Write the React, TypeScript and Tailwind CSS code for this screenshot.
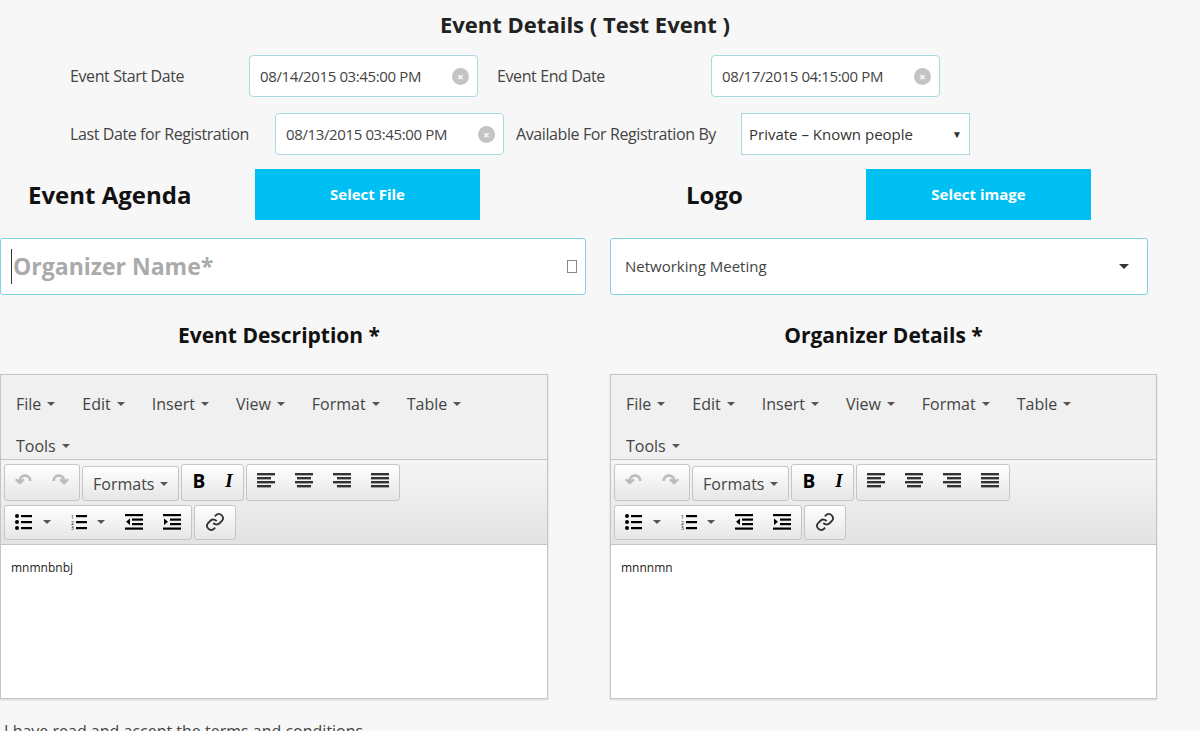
import React from "react";

const font = { fontFamily: "'Open Sans', 'Liberation Sans', sans-serif" };

function DateInput({ value, width }: { value: string; width: string }) {
  return (
    <div className={`flex h-[42px] items-center justify-between rounded-sm border border-[#a9d8e0] bg-white pl-[10px] pr-[8px] ${width}`}>
      <span className="text-[15px] text-[#444] tracking-tight">{value}</span>
      <span className="flex h-[17px] w-[17px] items-center justify-center rounded-full bg-[#c4c4c4] text-[11px] font-bold leading-none text-white">×</span>
    </div>
  );
}

const Caret = () => <span className="ml-[6px] inline-block h-0 w-0 border-x-[4px] border-t-[4px] border-x-transparent border-t-[#555] align-middle" />;

function Lines({ kind }: { kind: "left" | "center" | "right" | "justify" }) {
  const rows = [14, 10, 14, 10];
  return (
    <svg width="18" height="16" viewBox="0 0 18 16">
      {rows.map((w, i) => {
        const ww = kind === "justify" ? 18 : w + 4;
        const x = kind === "left" || kind === "justify" ? 0 : kind === "right" ? 18 - ww : (18 - ww) / 2;
        return <rect key={i} x={x} y={i * 4} width={ww} height="2.4" fill="#333" />;
      })}
    </svg>
  );
}

function Editor({ text }: { text: string }) {
  const btn = "flex h-[33px] items-center justify-center px-[10px]";
  const group = "flex rounded-[3px] border border-[#c5c5c5] bg-gradient-to-b from-white to-[#e6e6e6]";
  return (
    <div className="flex h-[325px] flex-col border border-[#c5c5c5] bg-white shadow-[0_1px_2px_rgba(0,0,0,0.15)]">
      <div className="flex h-[85px] flex-wrap content-start gap-x-[27px] border-b border-[#c5c5c5] bg-[#f0f0f0] px-[15px] pt-[8px] text-[16px] text-[#444]">
        {["File", "Edit", "Insert", "View", "Format", "Table", "Tools"].map((m) => (
          <span key={m} className="flex h-[42px] items-center">{m}<Caret /></span>
        ))}
      </div>
      <div className="flex flex-col gap-[4px] border-b border-[#c5c5c5] bg-gradient-to-b from-[#f5f5f5] to-[#e3e3e3] px-[3px] py-[4px]">
        <div className="flex gap-[2px]">
          <div className={group}>
            <span className={`${btn} text-[20px] font-bold text-[#bbb]`}>↶</span>
            <span className={`${btn} text-[20px] font-bold text-[#bbb]`}>↷</span>
          </div>
          <div className={`${group} mt-[2px] h-[35px]`}>
            <span className={`${btn} h-[35px] text-[16px] text-[#444]`}>Formats<Caret /></span>
          </div>
          <div className={group}>
            <span className={`${btn} text-[19px] font-bold`}>B</span>
            <span className={`${btn} text-[19px] font-bold italic`} style={{ fontFamily: "'Liberation Serif', serif" }}>I</span>
          </div>
          <div className={group}>
            <span className={btn}><Lines kind="left" /></span>
            <span className={btn}><Lines kind="center" /></span>
            <span className={btn}><Lines kind="right" /></span>
            <span className={btn}><Lines kind="justify" /></span>
          </div>
        </div>
        <div className="flex gap-[2px]">
          <div className={group}>
            <span className={btn}>
              <svg width="22" height="16" viewBox="0 0 22 16"><circle cx="2" cy="2" r="2" /><circle cx="2" cy="8" r="2" /><circle cx="2" cy="14" r="2" /><rect x="6" y="1" width="11" height="2.2" /><rect x="6" y="7" width="11" height="2.2" /><rect x="6" y="13" width="11" height="2.2" /></svg>
              <Caret />
            </span>
            <span className={btn}>
              <svg width="20" height="16" viewBox="0 0 20 16"><text x="0" y="5" fontSize="5">1</text><text x="0" y="10.5" fontSize="5">2</text><text x="0" y="16" fontSize="5">3</text><rect x="5" y="1" width="11" height="2.2" /><rect x="5" y="7" width="11" height="2.2" /><rect x="5" y="13" width="11" height="2.2" /></svg>
              <Caret />
            </span>
            <span className={btn}>
              <svg width="18" height="16" viewBox="0 0 18 16"><rect x="0" y="0" width="18" height="2.2" /><rect x="7" y="4.5" width="11" height="2.2" /><rect x="7" y="9" width="11" height="2.2" /><rect x="0" y="13.5" width="18" height="2.2" /><path d="M5 4.5 L1 7.8 L5 11 Z" /></svg>
            </span>
            <span className={btn}>
              <svg width="18" height="16" viewBox="0 0 18 16"><rect x="0" y="0" width="18" height="2.2" /><rect x="7" y="4.5" width="11" height="2.2" /><rect x="7" y="9" width="11" height="2.2" /><rect x="0" y="13.5" width="18" height="2.2" /><path d="M1 4.5 L5 7.8 L1 11 Z" /></svg>
            </span>
          </div>
          <div className={group}>
            <span className={btn}>
              <svg width="20" height="20" viewBox="0 0 24 24" fill="none" stroke="#333" strokeWidth="2.2"><path d="M10 13a5 5 0 0 0 7.5.5l3-3a5 5 0 0 0-7-7l-1.7 1.7" /><path d="M14 11a5 5 0 0 0-7.5-.5l-3 3a5 5 0 0 0 7 7l1.7-1.7" /></svg>
            </span>
          </div>
        </div>
      </div>
      <div className="px-[10px] pt-[14px] text-[12px] text-[#222]">{text}</div>
    </div>
  );
}

export default function App() {
  const label = "text-[16px] text-[#444] tracking-tight";
  return (
    <div className="h-[731px] w-[1200px] overflow-hidden bg-[#f7f7f7]" style={font}>
      <div className="pt-[8px] pl-[440px] text-[22px] font-bold text-[#222]">Event Details ( Test Event )</div>
      <div className="mt-[14px] flex items-center pl-[70px]">
        <span className={`${label} w-[179px]`}>Event Start Date</span>
        <DateInput value="08/14/2015 03:45:00 PM" width="w-[229px]" />
        <span className={`${label} ml-[19px] w-[214px]`}>Event End Date</span>
        <DateInput value="08/17/2015 04:15:00 PM" width="w-[229px]" />
      </div>
      <div className="mt-[16px] flex items-center pl-[70px]">
        <span className={`${label} w-[205px]`}>Last Date for Registration</span>
        <DateInput value="08/13/2015 03:45:00 PM" width="w-[229px]" />
        <span className={`${label} ml-[12px] w-[225px]`}>Available For Registration By</span>
        <div className="flex h-[42px] w-[229px] items-center justify-between border border-[#a9d8e0] bg-white px-[7px] text-[15px] text-[#333]">
          <span>Private – Known people</span>
          <span className="text-[10px]">▼</span>
        </div>
      </div>
      <div className="mt-[14px] flex items-center">
        <span className="w-[255px] pl-[28px] text-[24px] font-bold text-[#111]">Event Agenda</span>
        <div className="flex h-[51px] w-[225px] items-center justify-center bg-[#00bff3] text-[15px] font-bold text-white">Select File</div>
        <span className="w-[386px] pl-[206px] text-[24px] font-bold text-[#111]">Logo</span>
        <div className="flex h-[51px] w-[225px] items-center justify-center bg-[#00bff3] text-[15px] font-bold text-white">Select image</div>
      </div>
      <div className="mt-[18px] flex gap-[24px]">
        <div className="flex h-[57px] w-[586px] items-center justify-between rounded-[3px] border border-[#7fd3e3] bg-white pl-[10px] pr-[8px]">
          <span className="border-l border-[#333] pl-[1px] text-[23px] font-bold text-[#aaa]">Organizer Name*</span>
          <span className="h-[13px] w-[10px] border border-[#888]" />
        </div>
        <div className="flex h-[57px] w-[538px] items-center justify-between rounded-[3px] border border-[#7fd3e3] bg-white pl-[14px] pr-[18px]">
          <span className="text-[15px] text-[#444]">Networking Meeting</span>
          <span className="h-0 w-0 border-x-[5px] border-t-[5px] border-x-transparent border-t-[#333]" />
        </div>
      </div>
      <div className="mt-[25px] flex">
        <div className="w-[548px] text-center text-[21px] font-bold text-[#111]"><span className="relative left-[5px]">Event Description *</span></div>
        <div className="ml-[62px] w-[547px] text-center text-[21px] font-bold text-[#111]">Organizer Details *</div>
      </div>
      <div className="mt-[22px] flex gap-[62px]">
        <div className="w-[548px]"><Editor text="mnmnbnbj" /></div>
        <div className="w-[547px]"><Editor text="mnnnmn" /></div>
      </div>
      <div className="mt-[20px] pl-[4px] text-[16px] text-[#444]">I have read and accept the terms and conditions</div>
    </div>
  );
}
